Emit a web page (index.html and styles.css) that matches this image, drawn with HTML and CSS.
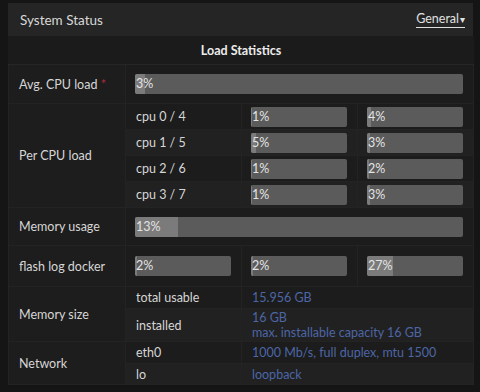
FILE: index.html
```html
<!DOCTYPE html>
<html lang="en">
<head>
  <meta charset="UTF-8">
  <title>System Status</title>
  <link rel="stylesheet" href="styles.css">
</head>
<body>

<div class="panel">
  <div class="panel-head">
    <span class="panel-title">System Status</span>
    <span class="menu">General<span class="caret">&#9662;</span></span>
  </div>

  <table class="stats">
    <colgroup>
      <col class="c-label">
      <col class="c-col">
      <col class="c-col">
      <col class="c-col">
    </colgroup>
    <thead>
      <tr><th colspan="4">Load Statistics</th></tr>
    </thead>
    <tbody>
      <tr class="r-avg">
        <td class="label">Avg. CPU load <span class="req">*</span></td>
        <td colspan="3" class="barcell"><div class="bar"><div class="fill" style="width: 3%"></div><span>3%</span></div></td>
      </tr>

      <tr class="r-cpu">
        <td class="label" rowspan="4">Per CPU load</td>
        <td class="sub">cpu 0 / 4</td>
        <td class="barcell"><div class="bar"><div class="fill" style="width: 1%"></div><span>1%</span></div></td>
        <td class="barcell"><div class="bar"><div class="fill" style="width: 4%"></div><span>4%</span></div></td>
      </tr>
      <tr class="r-cpu alt">
        <td class="sub">cpu 1 / 5</td>
        <td class="barcell"><div class="bar"><div class="fill" style="width: 5%"></div><span>5%</span></div></td>
        <td class="barcell"><div class="bar"><div class="fill" style="width: 3%"></div><span>3%</span></div></td>
      </tr>
      <tr class="r-cpu">
        <td class="sub">cpu 2 / 6</td>
        <td class="barcell"><div class="bar"><div class="fill" style="width: 1%"></div><span>1%</span></div></td>
        <td class="barcell"><div class="bar"><div class="fill" style="width: 2%"></div><span>2%</span></div></td>
      </tr>
      <tr class="r-cpu alt">
        <td class="sub">cpu 3 / 7</td>
        <td class="barcell"><div class="bar"><div class="fill" style="width: 1%"></div><span>1%</span></div></td>
        <td class="barcell"><div class="bar"><div class="fill" style="width: 3%"></div><span>3%</span></div></td>
      </tr>

      <tr class="r-mem">
        <td class="label">Memory usage</td>
        <td colspan="3" class="barcell"><div class="bar"><div class="fill" style="width: 13%"></div><span>13%</span></div></td>
      </tr>

      <tr class="r-flash">
        <td class="label">flash log docker</td>
        <td class="barcell"><div class="bar"><div class="fill" style="width: 2%"></div><span>2%</span></div></td>
        <td class="barcell"><div class="bar"><div class="fill" style="width: 2%"></div><span>2%</span></div></td>
        <td class="barcell"><div class="bar"><div class="fill" style="width: 27%"></div><span>27%</span></div></td>
      </tr>

      <tr class="r-info">
        <td class="label" rowspan="2">Memory size</td>
        <td class="sub">total usable</td>
        <td colspan="2" class="val">15.956 GB</td>
      </tr>
      <tr class="r-info2 alt">
        <td class="sub">installed</td>
        <td colspan="2" class="val">16 GB<br>max. installable capacity 16 GB</td>
      </tr>

      <tr class="r-info r-eth">
        <td class="label" rowspan="2">Network</td>
        <td class="sub">eth0</td>
        <td colspan="2" class="val">1000 Mb/s, full duplex, mtu 1500</td>
      </tr>
      <tr class="r-info r-lo alt">
        <td class="sub">lo</td>
        <td colspan="2" class="val">loopback</td>
      </tr>
    </tbody>
  </table>
</div>

</body>
</html>
```

FILE: styles.css
```css
body {
  margin: 0;
  background-color: #151515;
  font-family: Lato, "Open Sans", Arial, sans-serif;
  font-size: 12.5px;
  color: #d6d6d6;
}

.panel {
  width: 465px;
  margin: 3px 0 0 8px;
  background-color: #1b1b1b;
}

.panel-head {
  height: 33px;
  display: flex;
  align-items: center;
  justify-content: space-between;
  padding: 0 8px 0 12px;
  background-color: #252525;
}

.panel-title {
  font-size: 13.5px;
  color: #d8d8d8;
}

.menu {
  font-size: 12.5px;
  color: #e0e0e0;
  border-bottom: 1px solid #e0e0e0;
  line-height: 15px;
}

.caret {
  font-size: 10px;
  margin-left: 1px;
}

.stats {
  width: 465px;
  border-collapse: collapse;
  table-layout: fixed;
}

.c-label {
  width: 117px;
}

.c-col {
  width: 116px;
}

.stats th {
  height: 28px;
  padding: 0;
  font-weight: bold;
  font-size: 12.5px;
  color: #ececec;
  background-color: #1b1b1b;
  border-bottom: 1px solid #262626;
}

.stats td {
  padding: 0 10px;
  border: 1px solid #232323;
  background-color: #1c1c1c;
  vertical-align: middle;
}

.stats td.label {
  background-color: #1d1d1d;
}

.stats tr.alt td.sub,
.stats tr.alt td.barcell,
.stats tr.alt td.val {
  background-color: #212121;
}

.stats td.barcell {
  padding: 0 10px 0 9px;
}

.req {
  color: #b0283c;
}

.r-avg td {
  height: 38px;
}

.r-cpu td {
  height: 25px;
}

.r-mem td {
  height: 37px;
}

.r-flash td {
  height: 40px;
}

.r-info td {
  height: 21px;
}

.r-eth td {
  height: 21px;
}

.r-lo td {
  height: 20px;
}

.r-info2 td {
  height: 32px;
}

.bar {
  position: relative;
  height: 20px;
  border-radius: 2px;
  background-color: #5b5b5b;
  overflow: hidden;
}

.fill {
  height: 100%;
  background-color: #7b7b7b;
}

.bar span {
  position: absolute;
  left: 1px;
  top: 0;
  line-height: 20px;
  color: #e4e4e4;
}

.val {
  color: #4c66a6;
  line-height: 15px;
}
```
